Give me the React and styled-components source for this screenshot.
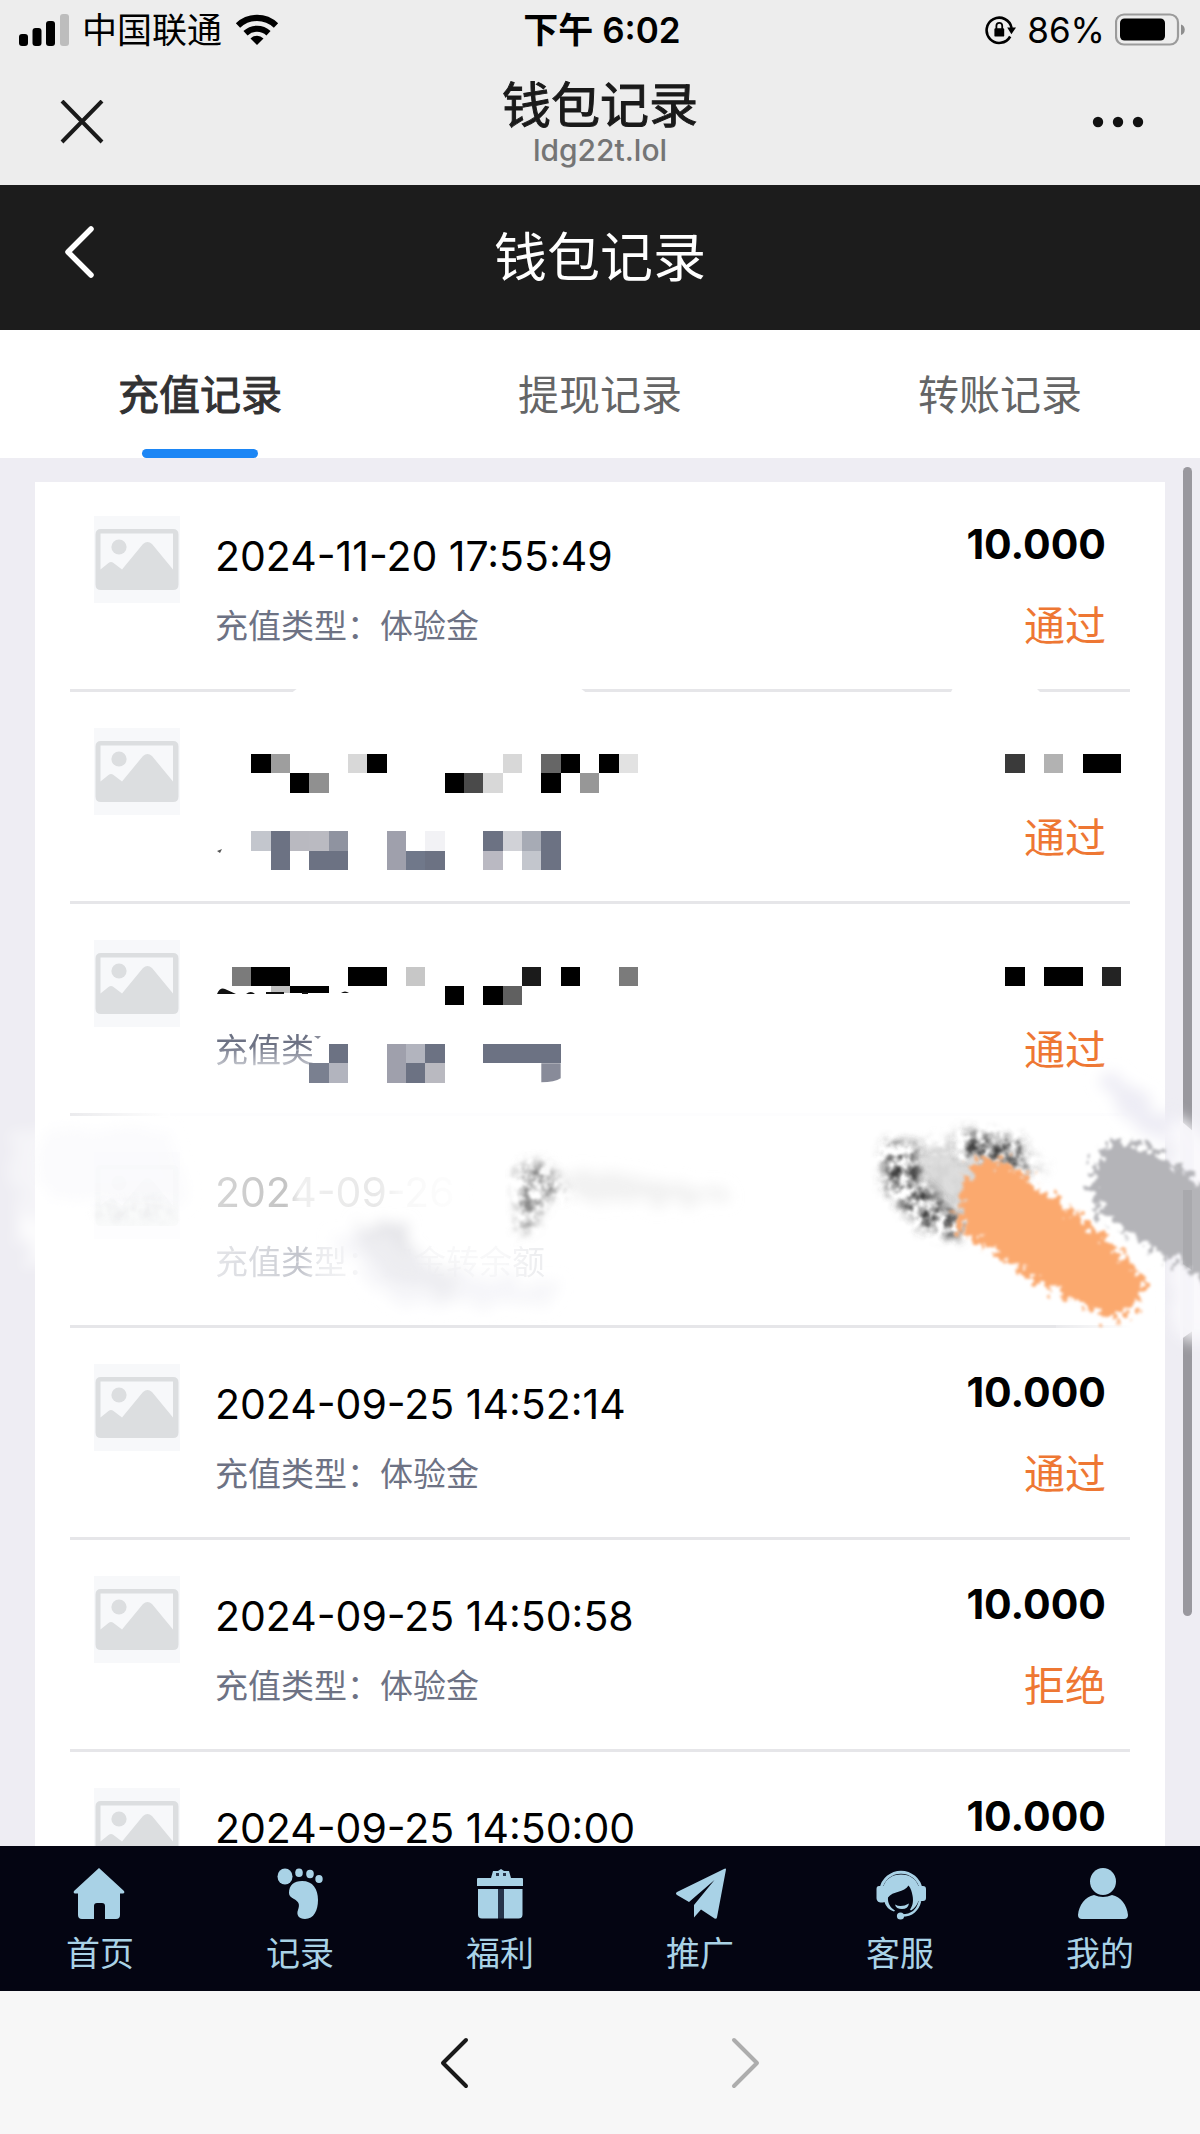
import React from "react";
import styled, { createGlobalStyle } from "styled-components";

const GlobalStyle = createGlobalStyle`
  *, *::before, *::after { box-sizing: border-box; }
  body {
    margin: 0;
    background: #f7f7f7;
    font-family: Inter, "Noto Sans CJK SC", sans-serif;
    color: #000;
  }
  button { font: inherit; border: 0; padding: 0; background: none; color: inherit; cursor: pointer; }
  a { color: inherit; text-decoration: none; }
  h1, h2, p { margin: 0; font-weight: 400; }
  ul { list-style: none; margin: 0; padding: 0; }
  svg { display: block; flex: none; }
`;

const Screen = styled.div`
  display: flex;
  flex-direction: column;
  height: 100vh;
  overflow: hidden;
`;

/* ---------- phone and browser chrome ---------- */

const Chrome = styled.header`
  flex: none;
  height: 185px;
  background: #ededed;
`;

const StatusBar = styled.div`
  display: grid;
  grid-template-columns: 1fr auto 1fr;
  align-items: center;
  height: 60px;
  padding: 0 15px 0 19px;
  line-height: 44px;
`;

const StatusGroup = styled.div`
  display: flex;
  align-items: center;
  justify-content: ${(p) => (p.$end ? "flex-end" : "flex-start")};
  gap: ${(p) => (p.$end ? 10 : 13)}px;
  font-size: 35px;
`;

const Clock = styled.div`
  font-size: 35px;
  font-weight: 600;
`;

const TitleBar = styled.div`
  display: grid;
  grid-template-columns: 1fr auto 1fr;
  align-items: center;
  height: 124px;
  padding: 0 56px;
`;

const PageName = styled.div`
  text-align: center;
`;

const SiteTitle = styled.h1`
  font-size: 49px;
  line-height: 56px;
  color: #1a1a1a;
  -webkit-text-stroke: 1px #1a1a1a;
`;

const SiteHost = styled.p`
  font-size: 30px;
  line-height: 32px;
  font-weight: 500;
  color: #757575;
`;

const IconButton = styled.button`
  display: flex;
  align-items: center;
  justify-content: center;
  width: 52px;
  height: 52px;
  justify-self: ${(p) => (p.$end ? "end" : "start")};
`;

/* ---------- page header and tabs ---------- */

const NavHeader = styled.div`
  display: grid;
  grid-template-columns: 1fr auto 1fr;
  align-items: start;
  flex: none;
  height: 145px;
  padding: 41px 53px 0;
  background: #1c1c1c;
  color: #fff;
`;

const NavTitle = styled.h2`
  font-size: 53px;
  line-height: 64px;
`;

const Tabs = styled.div`
  display: grid;
  grid-template-columns: repeat(3, 1fr);
  flex: none;
  height: 128px;
  background: #fff;
`;

const Tab = styled.button`
  display: flex;
  flex-direction: column;
  align-items: center;
  justify-content: space-between;
  padding-top: 39px;
  font-size: 41px;
  line-height: 52px;
  color: ${(p) => (p.$active ? "#323233" : "#646566")};
  -webkit-text-stroke: ${(p) => (p.$active ? "1px #323233" : "0")};

  &::after {
    content: "";
    width: 116px;
    height: 9px;
    border-radius: 5px;
    background: ${(p) => (p.$active ? "#1c86f5" : "transparent")};
  }
`;

/* ---------- list ---------- */

const ListArea = styled.main`
  position: relative;
  flex: 1;
  min-height: 0;
  overflow: hidden;
  padding: 24px 35px 0;
  background: #eeedf3;
`;

const Card = styled.ul`
  padding: 0 35px;
  background: #fff;
`;

const Row = styled.li`
  display: flex;
  align-items: flex-start;
  gap: 35px;
  height: 212px;
  padding: 36px 24px 0;
  border-bottom: 3px solid #e6e6e9;

  &:first-child { height: 210px; padding-top: 34px; }
`;

const Detail = styled.div`
  flex: 1;
  padding-top: 20px;
`;

const DateText = styled.p`
  min-height: 40px;
  font-size: 41px;
  line-height: 40px;
  ${(p) => p.$faded && `
    color: #c4c4c4;
    mask-image: linear-gradient(90deg, rgba(0,0,0,.7) 0, #000 70px, rgba(0,0,0,.25) 85px, rgba(0,0,0,.4) 160px, rgba(0,0,0,.12) 185px, transparent 260px);
  `}
`;

const TypeText = styled.p`
  margin-top: 28px;
  font-size: 33px;
  line-height: 44px;
  color: #6d7284;
  ${(p) => p.$faded && `
    mask-image: linear-gradient(90deg, rgba(0,0,0,.18) 0, rgba(0,0,0,.3) 60px, rgba(0,0,0,.42) 85px, rgba(0,0,0,.14) 105px, rgba(0,0,0,.05) 150px, rgba(0,0,0,.05) 290px, rgba(0,0,0,.12) 320px);
  `}
  ${(p) => p.$cut && `
    mask-image: linear-gradient(180deg, #000 40%, rgba(0,0,0,.35) 90%);
  `}
`;

const Result = styled.div`
  text-align: right;
`;

const Amount = styled.p`
  min-height: 56px;
  font-size: 41px;
  line-height: 56px;
  font-weight: 700;
`;

const State = styled.p`
  margin-top: 28px;
  font-size: 41px;
  line-height: 52px;
  color: #ee7733;
`;

const ScrollThumb = styled.div`
  position: absolute;
  top: 9px;
  right: 8px;
  width: 9px;
  height: 1149px;
  border-radius: 5px;
  background: #99989e;
`;

const Marks = styled.svg`
  position: absolute;
  top: 0;
  left: 0;
  width: 100%;
  pointer-events: none;
`;

/* ---------- bottom bars ---------- */

const TabBar = styled.nav`
  display: grid;
  grid-template-columns: repeat(6, 1fr);
  flex: none;
  height: 145px;
  padding-top: 22px;
  background: #040512;
  color: #a9d2e6;
`;

const TabLink = styled.a`
  display: flex;
  flex-direction: column;
  align-items: center;
  gap: 10px;
  font-size: 34px;
  line-height: 48px;
`;

const BrowserBar = styled.footer`
  display: flex;
  justify-content: center;
  align-items: center;
  gap: 240px;
  flex: none;
  height: 143px;
  background: #f7f7f7;
`;

/* ---------- icons ---------- */

const Signal = () => (
  <svg width="50" height="36" viewBox="0 0 50 36" aria-hidden="true">
    <rect x="0" y="22" width="9" height="12" rx="3" />
    <rect x="13.5" y="16" width="9" height="18" rx="3" />
    <rect x="27" y="9" width="9" height="25" rx="3" />
    <rect x="41" y="2" width="9" height="32" rx="3" fill="#bdbdbd" />
  </svg>
);

const Wifi = () => (
  <svg width="44" height="34" viewBox="0 0 44 34" aria-hidden="true">
    <path d="M3 12.5a27.5 27.5 0 0 1 38 0" fill="none" stroke="#000" strokeWidth="6.2" />
    <path d="M10.5 20.2a16.8 16.8 0 0 1 23 0" fill="none" stroke="#000" strokeWidth="6" />
    <path d="M22 32l-6.5-6.6a9.3 9.3 0 0 1 13 0z" />
  </svg>
);

const RotationLock = () => (
  <svg width="32" height="30" viewBox="0 0 32 30" aria-hidden="true">
    <path d="M25.2 21.5A12.6 12.6 0 1 1 26.6 13" fill="none" stroke="#000" strokeWidth="2.6" />
    <path d="M22.2 12.6h8.8l-4.6 6.6z" />
    <rect x="9.4" y="13.2" width="9.8" height="8.4" rx="1.2" />
    <path d="M11.4 14v-3.2a2.900 2.900 0 0 1 5.800 0V14" fill="none" stroke="#000" strokeWidth="1.8" />
  </svg>
);

const Battery = () => (
  <svg width="70" height="34" viewBox="0 0 70 34" aria-hidden="true">
    <rect x="1" y="1.500" width="62" height="30" rx="8" fill="none" stroke="#9b9b9b" strokeWidth="2.2" />
    <rect x="5" y="5.500" width="45" height="22" rx="4.500" />
    <path d="M66 11.500c5 1.500 5 9 0 10.500z" fill="#8e8e8e" />
  </svg>
);

const Cross = () => (
  <svg width="44" height="44" viewBox="0 0 44 44" aria-hidden="true">
    <path d="M2 1l40 41M42 1L2 42" stroke="#1a1a1a" strokeWidth="4" />
  </svg>
);

const Dots = () => (
  <svg width="52" height="12" viewBox="0 0 52 12" aria-hidden="true" fill="#111">
    <circle cx="6" cy="6" r="5.200" />
    <circle cx="26" cy="6" r="5.200" />
    <circle cx="46" cy="6" r="5.200" />
  </svg>
);

const Chevron = ({ color, weight, flip }) => (
  <svg width="30" height="52" viewBox="0 0 30 52" aria-hidden="true">
    <path
      d={flip ? "M3 3l23 23L3 49" : "M27 3L4 26l23 23"}
      fill="none"
      stroke={color}
      strokeWidth={weight}
      strokeLinecap="round"
      strokeLinejoin="round"
    />
  </svg>
);

const Placeholder = ({ faded }) => (
  <svg width="86" height="87" viewBox="0 0 86 87" aria-hidden="true" opacity={faded ? 0.14 : 1}>
    <rect width="86" height="87" fill="#f7f8fa" />
    <path
      fill="#dcdee0"
      fillRule="evenodd"
      d="M7 13h72q5.500 0 5.500 5.500v50q0 5.500-5.500 5.500H7q-5.500 0-5.500-5.500v-50Q1.500 13 7 13zM6.500 17.500v36l8-6.500q2.500-2 5 0l8.500 6.500 21-25.500q4.500-4 9 0l21 25.500v-36z"
    />
    <circle cx="25" cy="31" r="7.600" fill="#dcdee0" />
  </svg>
);

const tabIcons = {
  home: <path d="M25 0L50 23q1 2-1 2.500h-3V47q0 4-4 4H31V38q0-3-3-3h-5q-3 0-3 3v13H8q-4 0-4-4V25.500H1Q-1 25 0 23z" />,
  foot: (
    <g>
      <ellipse cx="11" cy="8.500" rx="7.500" ry="8" />
      <ellipse cx="25" cy="4.800" rx="3.800" ry="4.300" />
      <ellipse cx="36" cy="6" rx="3.800" ry="4.200" />
      <ellipse cx="45" cy="11" rx="3.700" ry="4" />
      <path d="M15 25c0-8 5-12 13-12 11 0 16 8 16 19 0 10-4 19-13 19-6 0-9-4-7-9 2-6 1-8-4-11-3-2-5-3-5-6z" />
    </g>
  ),
  gift: (
    <g>
      <path d="M4 10h13l2-7h5l3-2 3 2h5l2 7h11q1 0 1 1v7H3v-7q0-1 1-1z" />
      <path d="M22 5h3v3h-3zM29 5h3v3h-3z" fill="#26344a" />
      <path d="M4 21h20v29.500H8q-4 0-4-4zM30 21h18.500v25.500q0 4-4 4H30z" />
      <path d="M24 21h6v29.500h-6z" fill="#26344a" />
    </g>
  ),
  plane: (
    <path d="M52 1.500Q52 0 50 1L3 24q-2 1.500 0 3l12 7L40.500 12 20 37v12.500l7-8 14 9.200q2 0 2-1.500z" />
  ),
  service: (
    <g transform="translate(1 0)">
      <path d="M6 21a20.300 20.300 0 0 1 40 0" fill="none" stroke="currentColor" strokeWidth="3" />
      <path
        fillRule="evenodd"
        d="M4 18h4.500C11 11 17 6.500 26 6.500S41 11 43.500 18H48q3 0 3 3v9q0 3-3 3h-4.500c-1.500 4-4 7.500-7.500 9.500l-1-1c3-4 3.500-9 2.500-14-.7-4-1.500-7-4-10-4 7-16 5.500-20.500 12-.5 5 2 10 7 13l-1 1c-5-1.500-8-5-9.500-9.500-4 1.500-8 0-8-4v-9q0-3 2.500-3z"
      />
      <path d="M20 36.500q6 3.500 14-1-1 5.500-7 5.500t-7-4.500z" />
      <path d="M45 33c-2 8.500-8 14.500-18 14.500" fill="none" stroke="currentColor" strokeWidth="2.600" />
      <circle cx="25.500" cy="48" r="3.600" />
    </g>
  ),
  user: (
    <g transform="translate(3 0)">
      <ellipse cx="26" cy="13.500" rx="13" ry="13.500" />
      <path d="M1 47c1-10 7-18 16-20q9 4 18 0c9 2 15 10 16 20q0 4-4 4H5q-4 0-4-4z" />
    </g>
  ),
};

/* ---------- pixelated and brushed-over areas ---------- */

const CELL = 58 / 3;

// [column, row, width in cells, fill]
const cells = [
  [13, 39, 1, "#000"], [14, 39, 1, "#9e9e9e"], [18, 39, 1, "#d8d8d8"], [19, 39, 1, "#000"],
  [26, 39, 1, "#d8d8d8"], [28, 39, 1, "#666"], [29, 39, 1, "#000"], [31, 39, 1, "#000"], [32, 39, 1, "#e2e2e2"],
  [15, 40, 1, "#000"], [16, 40, 1, "#909090"], [23, 40, 1, "#000"], [24, 40, 1, "#4a4a4a"],
  [25, 40, 1, "#d8d8d8"], [28, 40, 1, "#000"], [30, 40, 1, "#979797"],
  [13, 43, 1, "#c3c6cd"], [14, 43, 1, "#6c7283"], [15, 43, 1, "#b9b9c0"], [16, 43, 1, "#babac1"],
  [17, 43, 1, "#8f93a0"], [20, 43, 1, "#9fa0ac"], [22, 43, 1, "#f2f2f5"], [25, 43, 1, "#6c7283"],
  [26, 43, 1, "#d1d2d7"], [27, 43, 1, "#a7abb5"], [28, 43, 1, "#6c7283"],
  [14, 44, 1, "#6c7283"], [16, 44, 2, "#6c7283"], [20, 44, 1, "#9fa0ac"], [21, 44, 1, "#70788a"],
  [22, 44, 1, "#6c7283"], [25, 44, 1, "#bab9c2"], [27, 44, 1, "#c3c6cd"], [28, 44, 1, "#6c7283"],
  [52, 39, 1, "#3a3a3a"], [54, 39, 1, "#b2b2b2"], [56, 39, 2, "#000"],
  [12, 50, 1, "#7b7b7b"], [13, 50, 2, "#000"], [18, 50, 2, "#000"], [21, 50, 1, "#c7c7c7"],
  [27, 50, 1, "#1b1b1b"], [29, 50, 1, "#000"], [32, 50, 1, "#7b7b7b"],
  [23, 51, 1, "#000"], [25, 51, 1, "#000"], [26, 51, 1, "#606060"],
  [17, 54, 1, "#6c7283"], [20, 54, 1, "#9fa0ac"], [21, 54, 1, "#b2b4be"], [22, 54, 1, "#6c7283"],
  [25, 54, 4, "#6c7283"],
  [16, 55, 1, "#7a8090"], [17, 55, 1, "#b2b4be"], [20, 55, 1, "#9fa0ac"], [21, 55, 1, "#6c7283"],
  [22, 55, 1, "#b9b9c0"],
  [52, 50, 1, "#000"], [54, 50, 2, "#000"], [57, 50, 1, "#232323"],
];

const Overlay = () => (
  <Marks viewBox="0 458 1200 1388" aria-hidden="true">
    <defs>
      <filter id="rough" x="-20%" y="-20%" width="140%" height="140%">
        <feTurbulence type="fractalNoise" baseFrequency="0.13" numOctaves="4" seed="4" result="n" />
        <feDisplacementMap in="SourceGraphic" in2="n" scale="34" xChannelSelector="R" yChannelSelector="G" />
        <feGaussianBlur stdDeviation="1.4" />
      </filter>
      <filter id="smoke" x="-40%" y="-40%" width="180%" height="180%">
        <feTurbulence type="fractalNoise" baseFrequency="0.06" numOctaves="3" seed="9" result="n" />
        <feDisplacementMap in="SourceGraphic" in2="n" scale="30" xChannelSelector="R" yChannelSelector="G" />
        <feGaussianBlur stdDeviation="7" />
      </filter>
      <filter id="grain" x="-20%" y="-20%" width="140%" height="140%">
        <feTurbulence type="fractalNoise" baseFrequency="0.09" numOctaves="4" seed="12" result="n" />
        <feColorMatrix in="n" values="0 0 0 0 0  0 0 0 0 0  0 0 0 0 0  2.6 0 0 0 -0.9" result="a" />
        <feGaussianBlur in="SourceGraphic" stdDeviation="6" result="s" />
        <feComposite in="s" in2="a" operator="in" />
        <feGaussianBlur stdDeviation="1.2" />
      </filter>
      <linearGradient id="fadeL">
        <stop offset="0" stopColor="#fff" stopOpacity="0.2" />
        <stop offset="1" stopColor="#fff" />
      </linearGradient>
    </defs>

    {/* dividers rubbed out */}
    <path d="M290 694l8-6h282l8 6z" fill="#fff" />
    <path d="M950 694l3-6h83l6 6z" fill="#fff" />
    <rect x="70" y="1111" width="100" height="7" fill="url(#fadeL)" />
    <rect x="170" y="1111" width="962" height="7" fill="#fff" opacity="0.92" />
    <rect x="1056" y="1324" width="76" height="6" fill="url(#fadeL)" />

    {/* pixel blocks */}
    <g shapeRendering="crispEdges">
      {cells.map(([c, r, w, fill]) => (
        <rect key={`${c}-${r}`} x={c * CELL} y={r * CELL} width={w * CELL} height={CELL} fill={fill} />
      ))}
      <rect x={14 * CELL} y="986" width={CELL} height="7" fill="#bebebe" />
      <rect x={15 * CELL} y="986" width={2 * CELL} height="7" fill="#000" />
    </g>
    <path d="M541.300 1063.300h19.400v15q-6 4-19.400 4z" fill="#888b99" />
    <path d="M217 994q3-7 8-5l11 5zM246 994q5-4 9 0zM266 992h18v2h-18zM302 992h6v2h-6zM341 993q4-3 8 0z" fill="#111" />
    <path d="M217 851l5-2-2 4z" fill="#555" />
    <path d="M314 1036l7 0-3 3z" fill="#888b99" />

    {/* haze over the side margins and the scroll thumb */}
    <g filter="url(#smoke)">
      <path d="M8 1130l60-5v120l-50-5z" fill="#fff" opacity="0.4" />
      <path d="M24 1220h34v44H26z" fill="#fff" opacity="0.7" />
      <path d="M40 1130h130l20 70-150 0z" fill="#f7f7fb" opacity="0.5" />
      <path d="M1094 1076l26 2 60 42 10 40-70-46z" fill="#eeedf5" />
      <path d="M1168 1120l50 20v195h-45z" fill="#fbfafd" opacity="0.9" />
    </g>
    <path d="M1180 1120l14 12v198l-14 10z" fill="#f6f5fa" opacity="0.93" />

    {/* faint smears */}
    <g filter="url(#smoke)">
      <path d="M358 1228l46-4 16 36 36 14-6 20-50-8-36-30z" fill="#e1e1e5" />
      <path d="M325 1235l60 0 60 40 110 10-10 22-150-4z" fill="#f2f2f6" opacity="0.7" />
      <path d="M520 1165l80 10 130 15v12l-140-2z" fill="#ebebeb" opacity="0.7" />
    </g>
    <path d="M516 1168q22-14 38 4l14 24-22 4-8 22-20 14z" fill="#8a8a8a" filter="url(#grain)" />
    <path d="M96 1205l60-8 20 24H96z" fill="#dedee2" opacity="0.4" filter="url(#grain)" />

    {/* brush strokes */}
    <path d="M890 1146l60-10 80 14 20 20-80 18-6 48-40-8-34-36z" fill="#cfcfcf" opacity="0.8" filter="url(#grain)" />
    <path d="M906 1158l76-4 28 16-40 54-30-10z" fill="#d4d4d4" opacity="0.8" filter="url(#rough)" />
    <path
      d="M884 1142l34 4 4 36 44 40-8 18-38-12-36-42zM960 1130l60 8 10 36-30-10-40-6z"
      fill="#3c3c3c"
      filter="url(#grain)"
    />
    <path d="M976 1158l26 4 58 40 54 44 32 36-8 24-26 14-70-36-84-54 2-36z" fill="#fba96e" filter="url(#rough)" />
    <path d="M1106 1142l40 4 76 52v94l-56-36-66-42-10-34z" fill="#b4b4b8" filter="url(#rough)" />
    <path d="M1183 1190h9v80l-9-6z" fill="#929296" opacity="0.3" />
  </Marks>
);

/* ---------- data ---------- */

const tabs = ["充值记录", "提现记录", "转账记录"];

const rows = [
  { date: "2024-11-20 17:55:49", type: "充值类型：体验金", amount: "10.000", state: "通过" },
  { state: "通过" },
  { type: "充值类", cut: true, state: "通过" },
  { date: "2024-09-26 00", type: "充值类型：佣金转余额", faded: true },
  { date: "2024-09-25 14:52:14", type: "充值类型：体验金", amount: "10.000", state: "通过" },
  { date: "2024-09-25 14:50:58", type: "充值类型：体验金", amount: "10.000", state: "拒绝" },
  { date: "2024-09-25 14:50:00", amount: "10.000" },
];

const links = [
  ["home", "首页"],
  ["foot", "记录"],
  ["gift", "福利"],
  ["plane", "推广"],
  ["service", "客服"],
  ["user", "我的"],
];

export default function App() {
  return (
    <Screen>
      <GlobalStyle />
      <Chrome>
        <StatusBar>
          <StatusGroup>
            <Signal />
            <span>中国联通</span>
            <Wifi />
          </StatusGroup>
          <Clock>下午 6:02</Clock>
          <StatusGroup $end>
            <RotationLock />
            <span>86%</span>
            <Battery />
          </StatusGroup>
        </StatusBar>
        <TitleBar>
          <IconButton type="button" aria-label="关闭">
            <Cross />
          </IconButton>
          <PageName>
            <SiteTitle>钱包记录</SiteTitle>
            <SiteHost>ldg22t.lol</SiteHost>
          </PageName>
          <IconButton type="button" aria-label="更多" $end>
            <Dots />
          </IconButton>
        </TitleBar>
      </Chrome>

      <NavHeader>
        <IconButton type="button" aria-label="返回">
          <Chevron color="#fff" weight="5.500" />
        </IconButton>
        <NavTitle>钱包记录</NavTitle>
      </NavHeader>

      <Tabs role="tablist">
        {tabs.map((label, i) => (
          <Tab key={label} type="button" role="tab" aria-selected={i === 0} $active={i === 0}>
            {label}
          </Tab>
        ))}
      </Tabs>

      <ListArea>
        <Card>
          {rows.map((r, i) => (
            <Row key={i}>
              <Placeholder faded={r.faded} />
              <Detail>
                <DateText $faded={r.faded}>{r.date}</DateText>
                <TypeText $faded={r.faded} $cut={r.cut}>{r.type}</TypeText>
              </Detail>
              <Result>
                <Amount>{r.amount}</Amount>
                <State>{r.state}</State>
              </Result>
            </Row>
          ))}
        </Card>
        <ScrollThumb />
        <Overlay />
      </ListArea>

      <TabBar>
        {links.map(([icon, label]) => (
          <TabLink key={icon} href={`#${icon}`}>
            <svg width="52" height="52" viewBox="0 0 52 52" fill="currentColor" overflow="visible" aria-hidden="true">
              {tabIcons[icon]}
            </svg>
            {label}
          </TabLink>
        ))}
      </TabBar>

      <BrowserBar>
        <IconButton type="button" aria-label="后退">
          <Chevron color="#1a1a1a" weight="4" />
        </IconButton>
        <IconButton type="button" aria-label="前进" disabled>
          <Chevron color="#adadad" weight="4" flip />
        </IconButton>
      </BrowserBar>
    </Screen>
  );
}
